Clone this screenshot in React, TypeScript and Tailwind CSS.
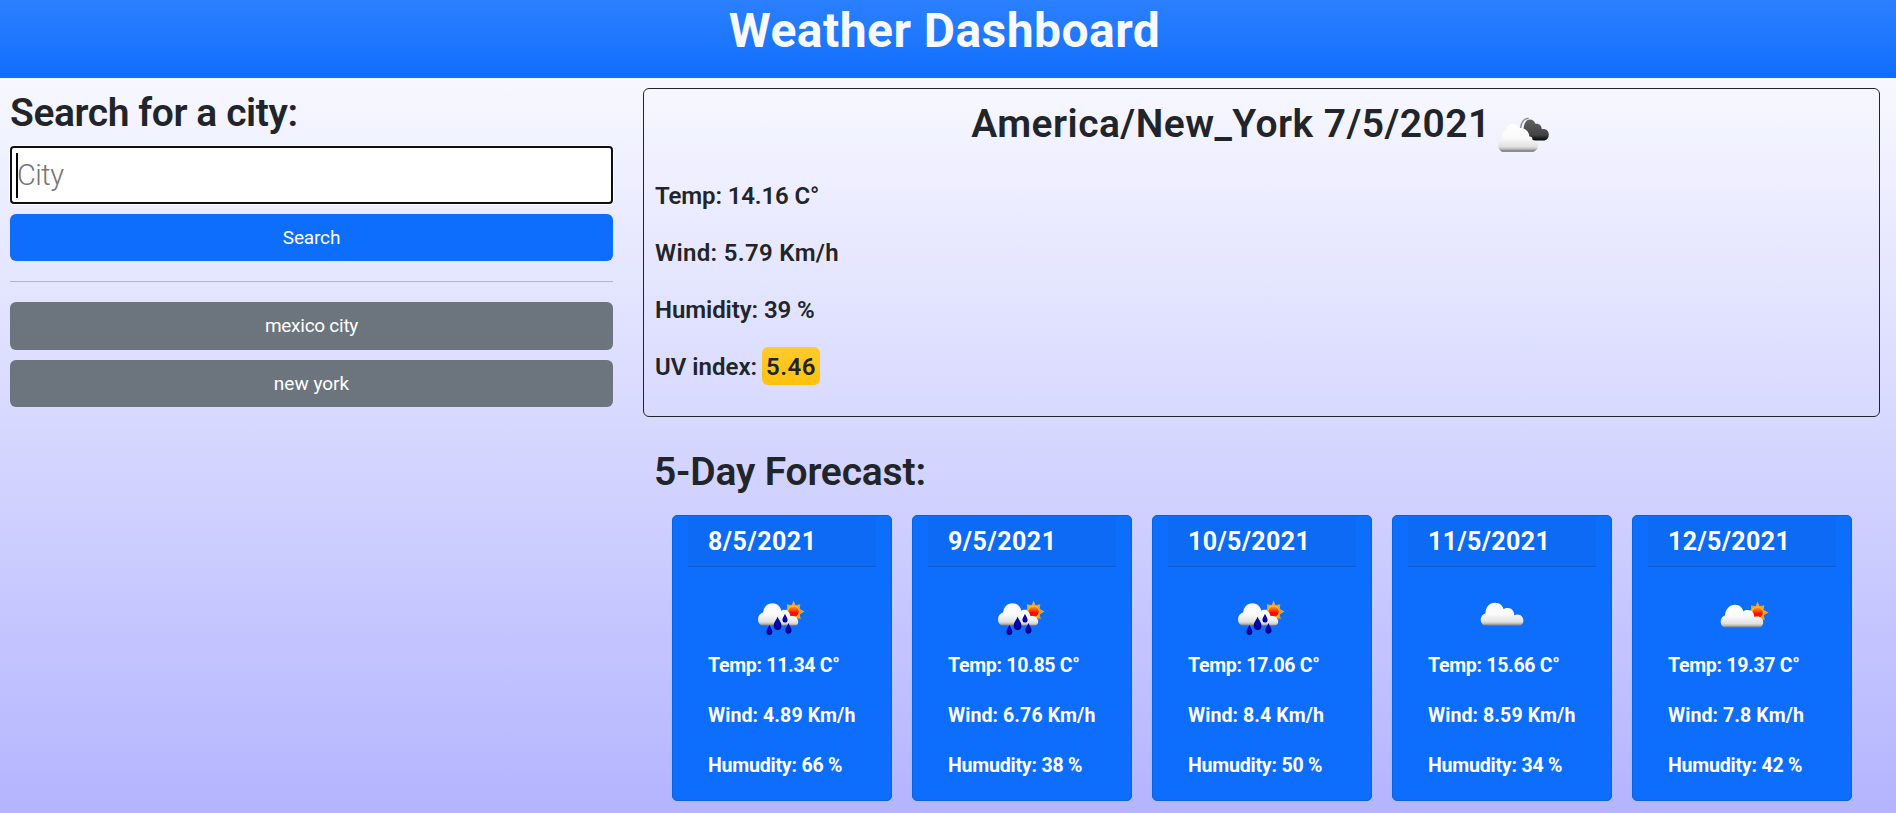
type IconKind = "rain" | "cloud" | "partly";

const forecast: {
  date: string;
  dateClass: string;
  icon: IconKind;
  temp: string;
  wind: string;
  humidity: string;
}[] = [
  { date: "8/5/2021", dateClass: "tracking-[0.48px]", icon: "rain", temp: "11.34", wind: "4.89", humidity: "66" },
  { date: "9/5/2021", dateClass: "tracking-[0.48px]", icon: "rain", temp: "10.85", wind: "6.76", humidity: "38" },
  { date: "10/5/2021", dateClass: "tracking-[0.35px]", icon: "rain", temp: "17.06", wind: "8.4", humidity: "50" },
  { date: "11/5/2021", dateClass: "tracking-[0.35px]", icon: "cloud", temp: "15.66", wind: "8.59", humidity: "34" },
  { date: "12/5/2021", dateClass: "tracking-[0.35px]", icon: "partly", temp: "19.37", wind: "7.8", humidity: "42" },
];

const CLOUD =
  "M16.5 36C12.8 36 10.7 33 10.7 29.8C10.7 26.6 12.8 24 15.4 23.4C15.5 17.4 19.4 12.8 24.8 12.8C29.6 12.8 32.6 15.6 33.6 19.2C34.6 18.3 36 17.9 37.6 17.9C41.8 17.9 44.4 21.2 44.2 25.2C45 24.7 46.2 24.4 47.4 24.4C51 24.4 53.4 27.2 53.4 30.4C53.4 33.8 51 36 47.6 36Z";

const DROP = "M0 -5.4C.8 -2.8 3 -1 3 1.8C3 3.6 1.7 4.9 0 4.9C-1.7 4.9 -3 3.6 -3 1.8C-3 -1 -.8 -2.8 0 -5.4Z";

function Defs() {
  return (
    <svg width="0" height="0" className="absolute">
      <defs>
        <linearGradient id="cloudFill" x1="0" y1="0" x2="0" y2="1">
          <stop offset="0" stopColor="#ffffff" />
          <stop offset="0.5" stopColor="#fafafa" />
          <stop offset="0.82" stopColor="#e0e0e0" />
          <stop offset="0.91" stopColor="#b5b5b5" />
          <stop offset="1" stopColor="#606060" />
        </linearGradient>
        <linearGradient id="darkFill" x1="0" y1="0" x2="0" y2="1">
          <stop offset="0" stopColor="#626262" />
          <stop offset="0.75" stopColor="#424242" />
          <stop offset="1" stopColor="#050505" />
        </linearGradient>
        <linearGradient id="sunFill" x1="0" y1="0" x2="0" y2="1">
          <stop offset="0" stopColor="#ffa31a" />
          <stop offset="0.35" stopColor="#ff4a08" />
          <stop offset="0.6" stopColor="#ff0a00" />
          <stop offset="1" stopColor="#ff1800" />
        </linearGradient>
        <radialGradient id="dropFill">
          <stop offset="0" stopColor="#0808d0" />
          <stop offset="1" stopColor="#000078" />
        </radialGradient>
      </defs>
    </svg>
  );
}

function Sun({ x, y }: { x: number; y: number }) {
  return (
    <g transform={`translate(${x} ${y})`}>
      <path
        d="M0 -11L2 -6.4L6.7 -7.4L6.1 -2.6L11 0L6.1 2.6L7.2 7.4L2.5 6.4L0 11L-2.5 6.4L-7 7L-6.4 2.6L-10.6 0L-6.4 -2.6L-6.7 -7.4L-2 -6.4Z"
        fill="#f9a01b"
      />
      <circle r="6.3" fill="#fdb833" />
      <circle r="5.2" fill="url(#sunFill)" />
    </g>
  );
}

function WeatherIcon({ kind }: { kind: IconKind }) {
  return (
    <svg width="64" height="50" viewBox="0 0 64 50">
      {kind === "cloud" && <path d={CLOUD} fill="url(#cloudFill)" />}
      {kind === "partly" && (
        <>
          <Sun x={47.6} y={22.6} />
          <path
            transform="translate(0 1.8)"
            d="M16.5 36C12.8 36 10.7 33 10.7 29.6C10.7 26.6 12.6 24.4 15 23.8C15.2 17.8 19.4 13 25 13C29.4 13 32.2 15.8 33.4 19.4C34.6 18.6 36 18.2 37.8 18.2C41.8 18.2 44.3 21 44.2 25.2C45 24.9 46.2 24.8 47.4 24.8C50.8 24.8 53.2 27.4 53.2 30.4C53.2 33.8 50.8 36 47.6 36Z"
            fill="url(#cloudFill)"
          />
        </>
      )}
      {kind === "rain" && (
        <>
          <Sun x={43.6} y={21.6} />
          <path
            d="M28 36C25.6 33 26 21.4 33.6 19.8C37.4 19.6 40.4 22.6 40.2 26.4C43.2 25.2 47.8 27 48.2 31.4C48.4 34.4 46.4 36 43.6 36Z"
            fill="url(#cloudFill)"
          />
          <path
            d="M14 36C10 35.6 7.9 32.6 8.1 29C8.2 25.6 10.6 23.2 13.2 22.6C13.6 17 17.4 13.2 22.4 13.2C27.6 13.2 31.4 17.4 31.4 22C31.4 27 30.6 32 27.4 36Z"
            fill="url(#cloudFill)"
          />
          <g fill="url(#dropFill)">
            <path d={DROP} transform="translate(19.4 40.2)" />
            <path d={DROP} transform="translate(27.6 33.6) scale(1.3)" />
            <path d={DROP} transform="translate(35 28.4) scale(.85)" />
            <path d={DROP} transform="translate(38.4 38.6) scale(1.05)" />
          </g>
        </>
      )}
    </svg>
  );
}

function BrokenCloudsIcon() {
  return (
    <svg width="64" height="60" viewBox="0 0 64 60" className="-ml-[3px] shrink-0">
      <path d="M32.6 29C33 23 36.4 19.4 40.6 19.3" fill="none" stroke="#8c8c8c" strokeWidth="1.4" />
      <path
        d="M36 41.4C34.6 36 34.4 21 41.4 20.4C44.8 20.4 46.8 22.4 47.4 24.8C50.8 24 53.6 26.2 53.8 30.2C57.8 29.4 60.8 31.8 60.8 35.4C60.8 39 58.6 41.4 55.6 41.4Z"
        fill="url(#darkFill)"
      />
      <path
        d="M16 52.8C12.4 52.8 10.2 49.8 10.2 46.4C10.2 43 12 40.6 14.4 39.8C13.6 35.4 15.4 32.4 18 31.6C18.8 27.6 21.2 25 24.4 25C27.4 25 29.6 26.6 30.8 29C36.6 28.4 41.2 32 41.4 37.4C43.6 37.2 44.8 38.8 44.4 41C47.6 41.4 49.9 43.8 49.9 46.8C49.9 50.4 47.6 52.8 44 52.8Z"
        fill="url(#cloudFill)"
      />
    </svg>
  );
}

export default function App() {
  return (
    <div className="flex h-[813px] w-full flex-col overflow-hidden bg-linear-to-b from-white to-[#b4b4ff] font-[Roboto,sans-serif] text-[#212529]">
      <Defs />
      <header className="h-[78px] shrink-0 bg-linear-to-b from-[#2b80ff] to-[#0d6efd] pt-[2px] pr-[7px]">
        <h1 className="text-center text-[48px] leading-[58px] font-bold tracking-[0.45px] text-[#f8f9fa]">
          Weather Dashboard
        </h1>
      </header>

      <div className="flex pl-[10px]">
        <aside className="flex w-[603px] shrink-0 flex-col pt-[10px]">
          <h2 className="text-[39px] leading-[50px] font-semibold tracking-[-0.41px]">Search for a city:</h2>
          <div className="mt-2 flex h-[58px] items-center rounded border-2 border-[#101010] bg-white pl-1 shadow-[0_0_0_1px_rgba(255,255,255,0.8)]">
            <span className="h-[45px] w-[2px] bg-black" />
            <span className="-ml-px pt-[2px] text-[29px] font-light tracking-[-0.5px] text-[#757575]">City</span>
          </div>
          <button className="mt-[10px] h-[47px] rounded-md bg-[#0d6efd] pt-px text-[19px] tracking-[-0.15px] text-white">
            Search
          </button>
          <div className="mt-[20px] h-px bg-[#b4b3c7]" />
          <button className="mt-[20px] h-[48px] rounded-md bg-[#6c757d] pt-px text-[19px] tracking-[-0.26px] text-white">
            mexico city
          </button>
          <button className="mt-[10px] h-[47px] rounded-md bg-[#6c757d] pt-[2px] text-[19px] text-white">new york</button>
        </aside>

        <main className="ml-[30px] w-[1237px] pt-[10px]">
          <section className="h-[329px] rounded-md border border-[#212529] pl-[11px]">
            <div className="flex h-[79px] justify-center pt-[10px] pr-[11px]">
              <h2 className="text-[39px] leading-[50px] font-semibold tracking-[0.46px] whitespace-nowrap">
                America/New_York 7/5/2021
              </h2>
              <BrokenCloudsIcon />
            </div>
            <div className="text-[24px] leading-[57px] font-semibold">
              <p className="tracking-[-0.13px]">Temp: 14.16 C°</p>
              <p className="tracking-[0.33px]">Wind: 5.79 Km/h</p>
              <p className="tracking-[-0.08px]">Humidity: 39 %</p>
              <div className="flex items-center gap-[5px]">
                <span>UV index:</span>
                <span className="-mt-[3px] flex h-[38px] w-[58px] items-center justify-center rounded-md bg-linear-to-b from-[#ffca2c] to-[#ffc107] pt-[2px] tracking-[0.5px]">
                  5.46
                </span>
              </div>
            </div>
          </section>

          <h2 className="mt-[30px] pl-[11px] text-[39px] leading-[50px] font-semibold tracking-[-0.18px]">
            5-Day Forecast:
          </h2>
          <div className="mt-[18px] flex gap-5 pl-[29px]">
            {forecast.map((day) => (
              <article
                key={day.date}
                className="h-[286px] w-[220px] rounded-[5px] border border-[#0b60de] bg-[#0d6efd] px-[15px] font-bold text-white"
              >
                <div className="flex h-[51px] items-center border-b border-black/15 bg-black/3 pt-[2px] pl-[20px] text-[25px]">
                  <span className={day.dateClass}>{day.date}</span>
                </div>
                <div className="flex h-[74px] justify-center pt-[23px]">
                  <WeatherIcon kind={day.icon} />
                </div>
                <div className="pl-[20px] text-[19.5px] leading-[50px] whitespace-nowrap">
                  <p className="tracking-[-0.28px]">Temp: {day.temp} C°</p>
                  <p className="tracking-[0.1px]">Wind: {day.wind} Km/h</p>
                  <p className="tracking-[-0.2px]">Humudity: {day.humidity} %</p>
                </div>
              </article>
            ))}
          </div>
        </main>
      </div>
    </div>
  );
}
